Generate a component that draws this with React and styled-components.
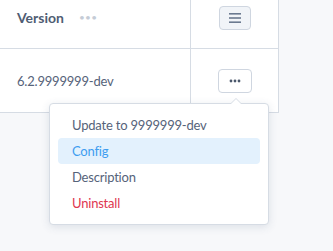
import React from 'react';
import styled, { createGlobalStyle } from 'styled-components';

const Global = createGlobalStyle`
  body {
    margin: 0;
    background: #f7f8fa;
    font-family: Lato, "Noto Sans", sans-serif;
  }
`;

const Page = styled.div`
  position: relative;
  width: 333px;
  height: 251px;
  overflow: hidden;
`;

const Table = styled.div`
  width: 278px;
  background: #ffffff;
  border-right: 1px solid #d6dce4;
  border-bottom: 1px solid #d6dce4;
  display: grid;
  grid-template-columns: 191px 1fr;
`;

const HeadCell = styled.div`
  height: 49px;
  box-sizing: border-box;
  display: flex;
  align-items: flex-start;
  justify-content: ${(p) => (p.$center ? 'center' : 'flex-start')};
  padding: ${(p) => (p.$center ? '6px 0 0' : '9px 0 0 17px')};
  border-right: ${(p) => (p.$center ? 'none' : '1px solid #d6dce4')};
  border-bottom: 1px solid #d6dce4;
`;

const BodyCell = styled.div`
  height: 63px;
  box-sizing: border-box;
  display: flex;
  align-items: center;
  justify-content: ${(p) => (p.$center ? 'center' : 'flex-start')};
  padding-left: ${(p) => (p.$center ? 0 : 17)}px;
  border-right: ${(p) => (p.$center ? 'none' : '1px solid #d6dce4')};
`;

const HeadTitle = styled.span`
  font-weight: 700;
  font-size: 14px;
  color: #4f5d73;
`;

const HeadDots = styled.span`
  margin-left: 15px;
  color: #c5ccd6;
  font-size: 10px;
  letter-spacing: 0.3px;
  position: relative;
  top: 2px;
`;

const VersionText = styled.span`
  font-size: 13px;
  letter-spacing: -0.2px;
  color: #56637a;
`;

const IconButton = styled.button`
  width: ${(p) => p.$w}px;
  height: 24px;
  border: 1px solid #cfd6e0;
  border-radius: 4px;
  background: ${(p) => p.$bg};
  display: flex;
  align-items: center;
  justify-content: center;
  padding: 0;
  box-sizing: border-box;
`;

const Popover = styled.div`
  position: absolute;
  left: 49px;
  top: 103px;
  width: 220px;
  box-sizing: border-box;
  padding: 8px;
  background: #ffffff;
  border: 1px solid #d6dce4;
  border-radius: 4px;
  box-shadow: 0 2px 8px rgba(60, 80, 110, 0.14);
  display: flex;
  flex-direction: column;

  &::before,
  &::after {
    content: '';
    position: absolute;
    left: 181px;
    width: 0;
    height: 0;
    border-left: 5px solid transparent;
    border-right: 5px solid transparent;
  }
  &::before {
    top: -6px;
    border-bottom: 5px solid #d6dce4;
  }
  &::after {
    top: -5px;
    border-bottom: 5px solid #ffffff;
  }
`;

const Item = styled.div`
  height: 26px;
  line-height: 27px;
  padding: 0 14px;
  border-radius: 4px;
  font-size: 13px;
  letter-spacing: -0.2px;
  color: ${(p) => p.$color || '#56637a'};
  background: ${(p) => (p.$active ? '#e3f1fd' : 'transparent')};
`;

const Hamburger = () => (
  <svg width="12" height="10" viewBox="0 0 12 10">
    <rect x="0" y="0" width="12" height="1.6" fill="#6b7a90" />
    <rect x="0" y="4.2" width="12" height="1.6" fill="#6b7a90" />
    <rect x="0" y="8.4" width="12" height="1.6" fill="#6b7a90" />
  </svg>
);

const Dots = () => (
  <svg width="12" height="4" viewBox="0 0 12 4">
    <circle cx="2" cy="2" r="1.4" fill="#4a576b" />
    <circle cx="6" cy="2" r="1.4" fill="#4a576b" />
    <circle cx="10" cy="2" r="1.4" fill="#4a576b" />
  </svg>
);

export default function App() {
  return (
    <Page>
      <Global />
      <Table>
        <HeadCell>
          <HeadTitle>Version</HeadTitle>
          <HeadDots>•••</HeadDots>
        </HeadCell>
        <HeadCell $center>
          <IconButton $w={32} $bg="#f1f4f8">
            <Hamburger />
          </IconButton>
        </HeadCell>
        <BodyCell>
          <VersionText>6.2.9999999-dev</VersionText>
        </BodyCell>
        <BodyCell $center>
          <IconButton $w={34} $bg="#ffffff">
            <Dots />
          </IconButton>
        </BodyCell>
      </Table>
      <Popover>
        <Item>Update to 9999999-dev</Item>
        <Item $active $color="#3d9df0">Config</Item>
        <Item>Description</Item>
        <Item $color="#e0364f">Uninstall</Item>
      </Popover>
    </Page>
  );
}
